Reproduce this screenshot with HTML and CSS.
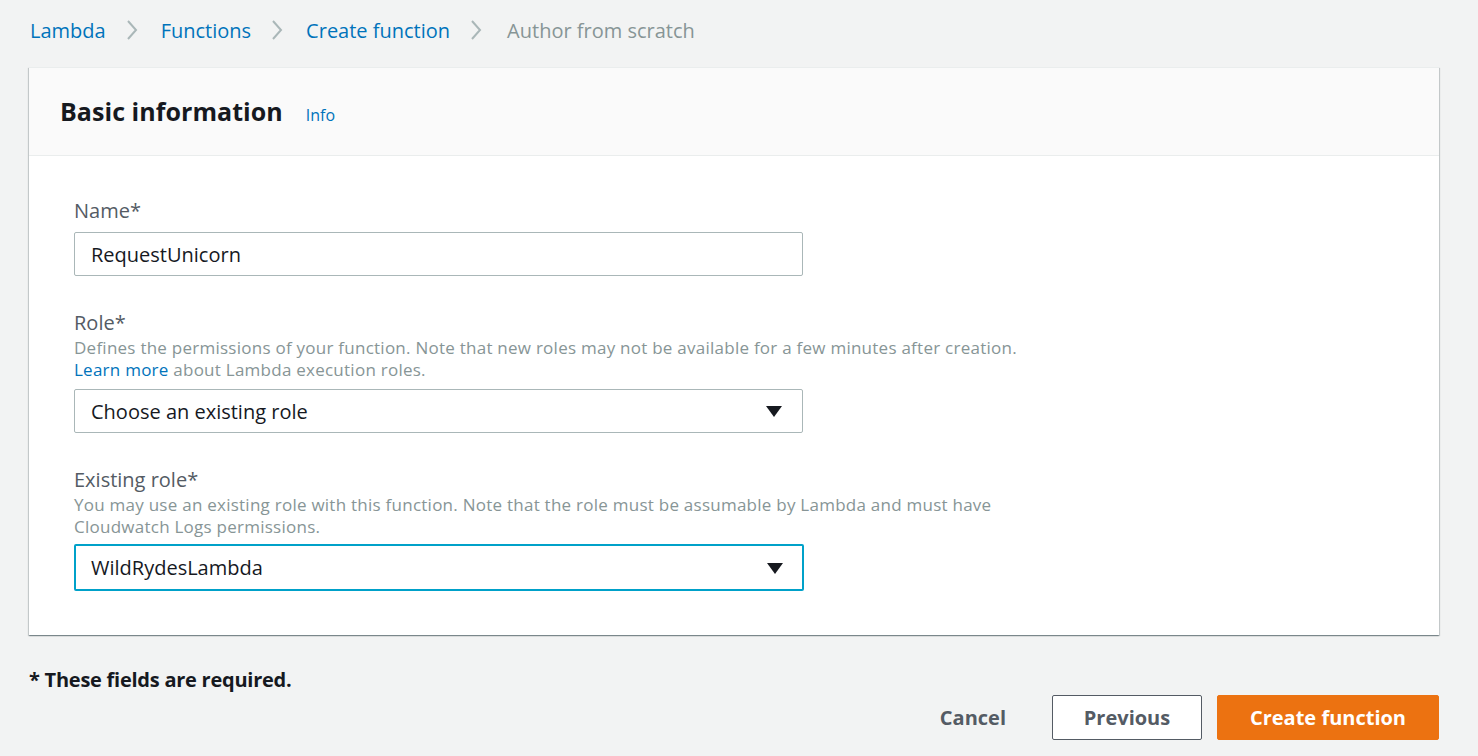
FILE: index.html
```html
<!DOCTYPE html>
<html>
<head>
<meta charset="utf-8">
<link rel="stylesheet" href="styles.css">
</head>
<body>
<div class="page">
  <nav class="crumbs">
    <a class="crumb">Lambda</a>
    <span class="sep"><svg width="12" height="20" viewBox="0 0 12 20"><path d="M2 1 L10 10 L2 19" fill="none" stroke="#aab7b8" stroke-width="2"/></svg></span>
    <a class="crumb">Functions</a>
    <span class="sep"><svg width="12" height="20" viewBox="0 0 12 20"><path d="M2 1 L10 10 L2 19" fill="none" stroke="#aab7b8" stroke-width="2"/></svg></span>
    <a class="crumb">Create function</a>
    <span class="sep"><svg width="12" height="20" viewBox="0 0 12 20"><path d="M2 1 L10 10 L2 19" fill="none" stroke="#aab7b8" stroke-width="2"/></svg></span>
    <span class="crumb current">Author from scratch</span>
  </nav>

  <section class="card">
    <header class="card-head">
      <h2>Basic information</h2>
      <a class="info">Info</a>
    </header>
    <div class="card-body">
      <div class="field">
        <label class="label">Name*</label>
        <div class="input">RequestUnicorn</div>
      </div>
      <div class="field">
        <label class="label">Role*</label>
        <p class="desc">Defines the permissions of your function. Note that new roles may not be available for a few minutes after creation.<br><a class="link">Learn more</a> about Lambda execution roles.</p>
        <div class="input select">Choose an existing role<span class="caret"></span></div>
      </div>
      <div class="field">
        <label class="label">Existing role*</label>
        <p class="desc">You may use an existing role with this function. Note that the role must be assumable by Lambda and must have<br>Cloudwatch Logs permissions.</p>
        <div class="input select focus">WildRydesLambda<span class="caret"></span></div>
      </div>
    </div>
  </section>

  <p class="required">* These fields are required.</p>

  <div class="actions">
    <button class="btn link-btn">Cancel</button>
    <button class="btn normal">Previous</button>
    <button class="btn primary">Create function</button>
  </div>
</div>
</body>
</html>
```

FILE: styles.css
```css
* { box-sizing: border-box; }
html, body { margin: 0; padding: 0; }
body {
  background: #f2f3f3;
  font-family: "Open Sans", "Noto Sans", sans-serif;
  color: #16191f;
}
.page {
  padding: 12px 39px 0 29px;
}
.crumbs {
  display: flex;
  align-items: center;
  height: 36px;
  font-size: 20px;
}
.crumb { color: #0073bb; padding-left: 1px; }
.crumb.current { color: #879596; margin-left: 2px; }
.sep {
  display: flex;
  align-items: center;
  margin: 0 22px 0 20px;
}
.card {
  margin-top: 19px;
  background: #fff;
  border-top: 1px solid #eaeded;
  box-shadow: 0 1px 1px 0 rgba(0,28,36,0.3), 1px 1px 1px 0 rgba(0,28,36,0.15), -1px 1px 1px 0 rgba(0,28,36,0.15);
}
.card-head {
  display: flex;
  align-items: baseline;
  height: 88px;
  padding: 26px 31px 0;
  background: #fafafa;
  border-bottom: 1px solid #eaeded;
}
.card-head h2 {
  margin: 0;
  font-size: 25px;
  font-weight: 700;
  letter-spacing: 0.05px;
}
.info {
  margin-left: 23px;
  font-size: 16px;
  color: #0073bb;
}
.card-body {
  padding: 40px 45px 44px;
}
.field { margin-bottom: 32px; }
.field:last-child { margin-bottom: 0; }
.label {
  display: block;
  font-size: 20px;
  line-height: 30px;
  color: #545b64;
  margin-bottom: 6px;
}
.desc {
  margin: -7px 0 8px;
  font-size: 17px;
  line-height: 22px;
  color: #879596;
  letter-spacing: 0.25px;
}
.link { color: #0073bb; }
.input {
  position: relative;
  width: 729px;
  height: 44px;
  border: 1px solid #aab7b8;
  border-radius: 2px;
  padding: 0 16px;
  display: flex;
  align-items: center;
  font-size: 20px;
  color: #16191f;
  background: #fff;
}
.input.focus {
  border: 2px solid #00a1c9;
  height: 47px;
  width: 730px;
  padding-left: 15px;
  margin-top: -2px;
}
.caret {
  position: absolute;
  right: 20px;
  top: 50%;
  margin-top: -5px;
  width: 0;
  height: 0;
  border-left: 8px solid transparent;
  border-right: 8px solid transparent;
  border-top: 11px solid #16191f;
}
.input.focus .caret { right: 19px; }
.required {
  margin: 33px 0 0;
  font-size: 20px;
  font-weight: 700;
  line-height: 24px;
  letter-spacing: -0.25px;
}
.actions {
  display: flex;
  justify-content: flex-end;
  align-items: center;
  margin-top: 3px;
}
.btn {
  font-family: inherit;
  font-size: 20px;
  font-weight: 700;
  height: 45px;
  border-radius: 2px;
  cursor: pointer;
}
.link-btn {
  background: transparent;
  border: none;
  color: #545b64;
  padding: 0;
  margin-right: 46px;
}
.normal {
  background: #fff;
  border: 1px solid #545b64;
  color: #545b64;
  width: 150px;
  margin-right: 15px;
}
.primary {
  background: #ec7211;
  border: 1px solid #ec7211;
  color: #fff;
  width: 222px;
}
```
